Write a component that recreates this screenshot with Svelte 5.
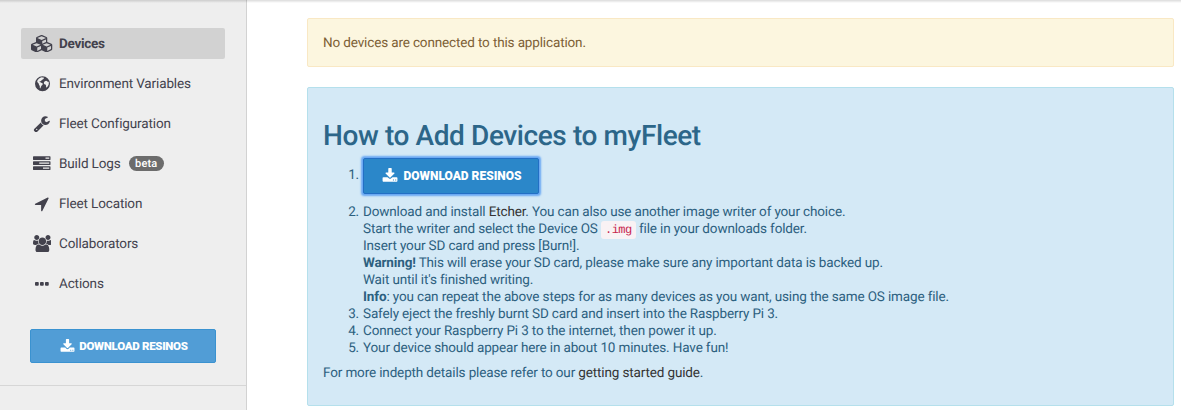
<script>
  const paths = {
    cubes: 'M640 1632l384-192v-314l-384 164v342zm-64-454l404-173-404-173-404 173zm1088 454l384-192v-314l-384 164v342zm-64-454l404-173-404-173-404 173zm-448-293l384-165v-266l-384 164v267zm-64-379l441-189-441-189-441 189zm1088 518v416q0 36-19 67t-52 47l-448 224q-25 14-57 14t-57-14l-448-224q-4-2-7-4-2 2-7 4l-448 224q-25 14-57 14t-57-14l-448-224q-33-16-52-47t-19-67v-416q0-38 21.5-70t56.5-48l434-186v-400q0-38 21.5-70t56.5-48l448-192q23-10 50-10t50 10l448 192q35 16 56.5 48t21.5 70v400l434 186q36 16 57 48t21 70z',
    globe: 'M768 128A768 768 0 1 0 768 1664A768 768 0 1 0 768 128ZM690 240L760 265 830 240 900 280 850 330 930 350 890 420 790 440 740 520 640 560 600 640 500 650 460 720 560 740 640 800 760 850 800 920 750 1030 660 1110 600 1240 550 1370 490 1310 490 1120 400 1010 400 900 310 820 220 670 260 540 390 380 540 280ZM1010 640L1130 590 1220 610 1300 690 1390 680 1420 800 1400 980 1310 1150 1190 1290 1130 1250 1140 1090 1070 980 960 950 900 850 930 720Z',
    wrench: 'M448 1472q0-26-19-45t-45-19-45 19-19 45 19 45 45 19 45-19 19-45zm644-420l-682 682q-37 37-90 37-52 0-91-37l-106-108q-38-36-38-90 0-53 38-91l681-681q39 98 114.5 173.5t173.5 114.5zm634-435q0 39-23 106-47 134-164.5 217.5t-258.5 83.5q-185 0-316.5-131.5t-131.5-316.5 131.5-316.5 316.5-131.5q58 0 121.5 16.5t107.5 46.5q16 11 16 28t-16 28l-293 169v224l193 107q5-3 79-48.5t135.5-81 70.5-35.5q15 0 23.5 10t8.5 25z',
    tasks: 'M1024 1408h640v-128h-640v128zm-384-512h1024v-128h-1024v128zm640-512h384v-128h-384v128zm512 832v256q0 26-19 45t-45 19h-1664q-26 0-45-19t-19-45v-256q0-26 19-45t45-19h1664q26 0 45 19t19 45zm0-512v256q0 26-19 45t-45 19h-1664q-26 0-45-19t-19-45v-256q0-26 19-45t45-19h1664q26 0 45 19t19 45zm0-512v256q0 26-19 45t-45 19h-1664q-26 0-45-19t-19-45v-256q0-26 19-45t45-19h1664q26 0 45 19t19 45z',
    arrow: 'M1593 349l-640 1280q-17 35-57 35-5 0-15-2-22-5-35.5-22.5t-13.5-39.5v-576h-576q-22 0-39.5-13.5t-22.5-35.5 4-42 29-30l1280-640q13-7 29-7 27 0 45 19 15 14 18.5 34.5t-6.5 39.5z',
    users: 'M593 896q-162 5-265 128h-134q-82 0-138-40.5t-56-118.5q0-353 124-353 6 0 43.5 21t97.5 42.5 119 21.5q67 0 133-23-5 37-5 66 0 139 81 256zm1071 637q0 120-73 189.5t-194 69.5h-874q-121 0-194-69.5t-73-189.5q0-53 3.5-103.5t14-109 26.5-108.5 43-97.5 62-81 85.5-53.5 111.5-20q10 0 43 21.5t73 48 107 48 135 21.5 135-21.5 107-48 73-48 43-21.5q61 0 111.5 20t85.5 53.5 62 81 43 97.5 26.5 108.5 14 109 3.5 103.5zm-1024-1277q0 106-75 181t-181 75-181-75-75-181 75-181 181-75 181 75 75 181zm704 384q0 159-112.5 271.5t-271.5 112.5-271.5-112.5-112.5-271.5 112.5-271.5 271.5-112.5 271.5 112.5 112.5 271.5zm576 225q0 78-56 118.5t-138 40.5h-134q-103-123-265-128 81-117 81-256 0-29-5-66 66 23 133 23 59 0 119-21.5t97.5-42.5 43.5-21q124 0 124 353zm-128-609q0 106-75 181t-181 75-181-75-75-181 75-181 181-75 181 75 75 181z',
    dots: 'M96 704h192q96 0 96 96v192q0 96-96 96h-192q-96 0-96-96v-192q0-96 96-96zm512 0h192q96 0 96 96v192q0 96-96 96h-192q-96 0-96-96v-192q0-96 96-96zm512 0h192q96 0 96 96v192q0 96-96 96h-192q-96 0-96-96v-192q0-96 96-96z',
    download: 'M1344 1344q0-26-19-45t-45-19-45 19-19 45 19 45 45 19 45-19 19-45zm256 0q0-26-19-45t-45-19-45 19-19 45 19 45 45 19 45-19 19-45zm128-224v320q0 40-28 68t-68 28h-1472q-40 0-68-28t-28-68v-320q0-40 28-68t68-28h465l135 136q58 56 136 56t136-56l136-136h464q40 0 68 28t28 68zm-325-569q17 41-14 70l-448 448q-18 19-45 19t-45-19l-448-448q-31-29-14-70 17-39 59-39h256v-448q0-26 19-45t45-19h256q26 0 45 19t19 45v448h256q42 0 59 39z'
  };
  const items = [
    { label: 'Devices', icon: 'cubes', w: 2304, active: true },
    { label: 'Environment Variables', icon: 'globe', w: 1536 },
    { label: 'Fleet Configuration', icon: 'wrench', w: 1792 },
    { label: 'Build Logs', icon: 'tasks', w: 1792, badge: 'beta' },
    { label: 'Fleet Location', icon: 'arrow', w: 1792 },
    { label: 'Collaborators', icon: 'users', w: 1920 },
    { label: 'Actions', icon: 'dots', w: 1408 }
  ];
</script>

{#snippet icon(name, w, size)}
  <svg viewBox="0 0 {w} 1792" width={(w * size) / 1792} height={size} fill="currentColor" fill-rule={name === 'globe' ? 'evenodd' : 'nonzero'}><path d={paths[name]} /></svg>
{/snippet}

<div class="page">
  <aside>
    <nav>
      {#each items as item}
        <a class:active={item.active}>
          <span class="ico">{@render icon(item.icon, item.w, 17.5)}</span>
          <span class="label">{item.label}</span>
          {#if item.badge}<span class="badge">{item.badge}</span>{/if}
        </a>
      {/each}
    </nav>
    <div class="side-action">
      <button class="btn">{@render icon('download', 1792, 15)}<span>DOWNLOAD RESINOS</span></button>
    </div>
  </aside>
  <main>
    <div class="alert warning">No devices are connected to this application.</div>
    <div class="alert info">
      <h2>How to Add Devices to myFleet</h2>
      <ol>
        <li class="first"><span class="num">1.</span><button class="btn focus">{@render icon('download', 1792, 16)}<span>DOWNLOAD RESINOS</span></button></li>
        <li><span class="num">2.</span><div>
          Download and install <a>Etcher</a>. You can also use another image writer of your choice.<br />
          Start the writer and select the Device OS <code>.img</code> file in your downloads folder.<br />
          Insert your SD card and press [Burn!].<br />
          <b>Warning!</b> This will erase your SD card, please make sure any important data is backed up.<br />
          Wait until it's finished writing.<br />
          <b>Info</b>: you can repeat the above steps for as many devices as you want, using the same OS image file.
        </div></li>
        <li><span class="num">3.</span><div>Safely eject the freshly burnt SD card and insert into the Raspberry Pi 3.</div></li>
        <li><span class="num">4.</span><div>Connect your Raspberry Pi 3 to the internet, then power it up.</div></li>
        <li><span class="num">5.</span><div>Your device should appear here in about 10 minutes. Have fun!</div></li>
      </ol>
      <p>For more indepth details please refer to our <a>getting started guide</a>.</p>
    </div>
  </main>
  <div class="top-shadow"></div>
</div>

<style>
  :global(body) { margin: 0; background: #fff; }
  .page {
    position: relative;
    display: flex;
    height: 410px;
    overflow: hidden;
    font: 13.5px/17px Roboto, sans-serif;
    letter-spacing: -0.14px;
    text-rendering: geometricPrecision;
  }
  .top-shadow {
    position: absolute;
    inset: 0 0 auto;
    height: 3px;
    background: linear-gradient(rgba(0, 0, 0, 0.14), rgba(0, 0, 0, 0));
  }
  aside {
    box-sizing: border-box;
    width: 247px;
    flex: none;
    background: #eee;
    border-right: 1px solid #d2d2d2;
    color: #43424d;
  }
  nav {
    display: flex;
    flex-direction: column;
    gap: 9px;
    padding: 28px 21px 0;
    letter-spacing: -0.13px;
  }
  nav a {
    display: flex;
    align-items: center;
    height: 31px;
    border-radius: 2px;
  }
  nav a.active { background: #d2d2d2; font-weight: 700; letter-spacing: -0.3px; }
  .label { padding-top: 2px; }
  .ico {
    display: flex;
    justify-content: center;
    width: 24px;
    margin: 0 5px 0 9px;
  }
  svg { display: block; flex: none; }
  .badge {
    margin-left: 8px;
    padding: 0 6.5px;
    border-radius: 8px;
    background: #6c6c6c;
    color: #fff;
    font-size: 11px;
    line-height: 15px;
    font-weight: 500;
    letter-spacing: 0.1px;
  }
  .side-action {
    margin-top: 30px;
    padding: 0 30px 22px;
    border-bottom: 1px solid #d6d6d6;
  }
  .btn {
    box-sizing: border-box;
    display: flex;
    align-items: center;
    justify-content: center;
    gap: 4px;
    width: 186px;
    height: 34px;
    padding: 0 0 0 2px;
    border: 1px solid #3a92d0;
    border-radius: 2px;
    background: #519dd6;
    color: #fff;
    font: 900 11.5px Roboto, sans-serif;
    letter-spacing: -0.3px;
  }
  .btn.focus {
    width: 176px;
    height: 36px;
    margin-top: -1px;
    border-color: #236fc4;
    background: #2b87c9;
    box-shadow: 0 0 2px 1.5px #67a7f3;
    font-size: 12px;
    letter-spacing: 0;
    gap: 5px;
  }
  main {
    flex: 1;
    padding: 18px 7px 0 60px;
  }
  .alert {
    box-sizing: border-box;
    padding: 15px;
    border: 1px solid;
    border-radius: 2px;
  }
  .warning {
    height: 49px;
    padding-top: 16px;
    margin-bottom: 20px;
    background: #fcf6df;
    border-color: #f9e8c4;
    color: #7d5f35;
  }
  .info {
    height: 319px;
    background: #d4e9f6;
    border-color: #b5e0ec;
    color: #2c607f;
  }
  h2 {
    margin: 17px 0 7px;
    font: 500 28px/31px Roboto, sans-serif;
    letter-spacing: -0.4px;
    color: #2c6689;
  }
  ol { margin: 0; padding: 0; list-style: none; }
  li { display: flex; }
  .num { width: 36px; padding-right: 4px; text-align: right; }
  .first { height: 46px; }
  .first .num { padding-top: 9px; }
  .first .btn { margin-top: 0; }
  .info a { color: #333; }
  code {
    padding: 2px 4px;
    border-radius: 3px;
    background: #f9f2f4;
    color: #c7254e;
    font: 12px/13px "Liberation Mono", monospace;
    letter-spacing: -0.5px;
  }
  p { margin: 8px 0 0; }
</style>
